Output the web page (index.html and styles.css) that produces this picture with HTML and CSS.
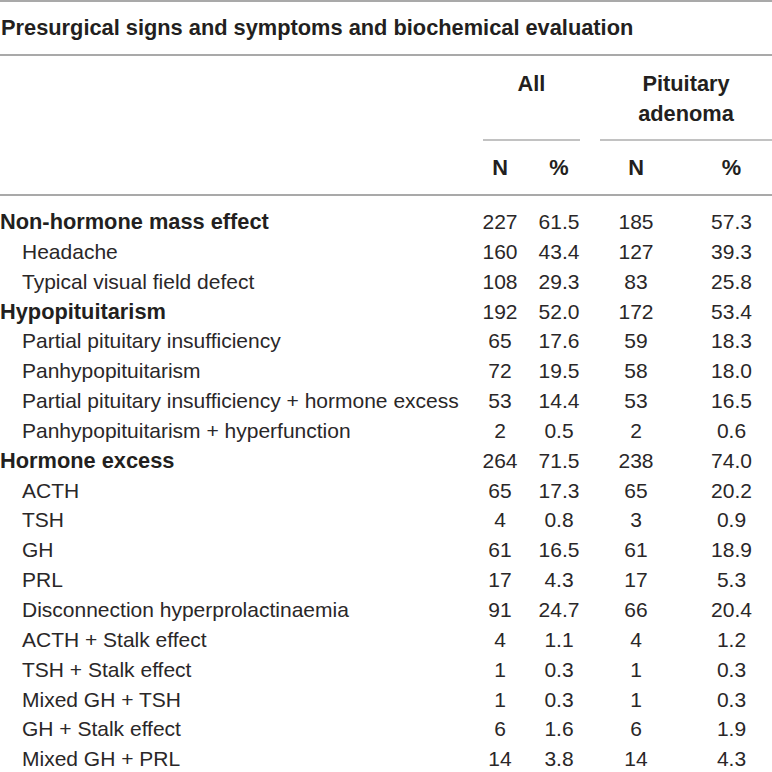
FILE: index.html
```html
<!DOCTYPE html>
<html>
<head>
<meta charset="utf-8">
<link rel="stylesheet" href="styles.css">
</head>
<body>
<table class="tbl">
  <colgroup>
    <col class="c-lab"><col class="c-n1"><col class="c-p1"><col class="c-n2"><col class="c-p2">
  </colgroup>
  <thead>
    <tr class="title-row"><th colspan="5" class="title">Presurgical signs and symptoms and biochemical evaluation</th></tr>
    <tr class="grp-row">
      <th class="blank" rowspan="2"></th>
      <th colspan="2" class="grp"><div class="grp-in g1">All</div></th>
      <th colspan="2" class="grp"><div class="grp-in g2">Pituitary<br>adenoma</div></th>
    </tr>
    <tr class="sub-row"><th class="num">N</th><th class="num">%</th><th class="num">N</th><th class="num last">%</th></tr>
  </thead>
  <tbody>
    <tr class="first"><td class="lab b">Non-hormone mass effect</td><td class="num">227</td><td class="num">61.5</td><td class="num">185</td><td class="num last">57.3</td></tr>
    <tr><td class="lab i">Headache</td><td class="num">160</td><td class="num">43.4</td><td class="num">127</td><td class="num last">39.3</td></tr>
    <tr><td class="lab i">Typical visual field defect</td><td class="num">108</td><td class="num">29.3</td><td class="num">83</td><td class="num last">25.8</td></tr>
    <tr><td class="lab b">Hypopituitarism</td><td class="num">192</td><td class="num">52.0</td><td class="num">172</td><td class="num last">53.4</td></tr>
    <tr><td class="lab i">Partial pituitary insufficiency</td><td class="num">65</td><td class="num">17.6</td><td class="num">59</td><td class="num last">18.3</td></tr>
    <tr><td class="lab i">Panhypopituitarism</td><td class="num">72</td><td class="num">19.5</td><td class="num">58</td><td class="num last">18.0</td></tr>
    <tr><td class="lab i">Partial pituitary insufficiency + hormone excess</td><td class="num">53</td><td class="num">14.4</td><td class="num">53</td><td class="num last">16.5</td></tr>
    <tr><td class="lab i">Panhypopituitarism + hyperfunction</td><td class="num">2</td><td class="num">0.5</td><td class="num">2</td><td class="num last">0.6</td></tr>
    <tr><td class="lab b">Hormone excess</td><td class="num">264</td><td class="num">71.5</td><td class="num">238</td><td class="num last">74.0</td></tr>
    <tr><td class="lab i">ACTH</td><td class="num">65</td><td class="num">17.3</td><td class="num">65</td><td class="num last">20.2</td></tr>
    <tr><td class="lab i">TSH</td><td class="num">4</td><td class="num">0.8</td><td class="num">3</td><td class="num last">0.9</td></tr>
    <tr><td class="lab i">GH</td><td class="num">61</td><td class="num">16.5</td><td class="num">61</td><td class="num last">18.9</td></tr>
    <tr><td class="lab i">PRL</td><td class="num">17</td><td class="num">4.3</td><td class="num">17</td><td class="num last">5.3</td></tr>
    <tr><td class="lab i">Disconnection hyperprolactinaemia</td><td class="num">91</td><td class="num">24.7</td><td class="num">66</td><td class="num last">20.4</td></tr>
    <tr><td class="lab i">ACTH + Stalk effect</td><td class="num">4</td><td class="num">1.1</td><td class="num">4</td><td class="num last">1.2</td></tr>
    <tr><td class="lab i">TSH + Stalk effect</td><td class="num">1</td><td class="num">0.3</td><td class="num">1</td><td class="num last">0.3</td></tr>
    <tr><td class="lab i">Mixed GH + TSH</td><td class="num">1</td><td class="num">0.3</td><td class="num">1</td><td class="num last">0.3</td></tr>
    <tr><td class="lab i">GH + Stalk effect</td><td class="num">6</td><td class="num">1.6</td><td class="num">6</td><td class="num last">1.9</td></tr>
    <tr><td class="lab i">Mixed GH + PRL</td><td class="num">14</td><td class="num">3.8</td><td class="num">14</td><td class="num last">4.3</td></tr>
  </tbody>
</table>
</body>
</html>
```
FILE: styles.css
```css
html, body {
  margin: 0;
  padding: 0;
  background: #ffffff;
}
body {
  font-family: "Liberation Sans", Arial, sans-serif;
  color: #231f20;
}
.tbl {
  width: 772px;
  table-layout: fixed;
  border-collapse: separate;
  border-spacing: 0;
}
.c-lab { width: 470px; }
.c-n1 { width: 60px; }
.c-p1 { width: 58px; }
.c-n2 { width: 96px; }
.c-p2 { width: 88px; }

th, td {
  padding: 0;
  white-space: nowrap;
}
.title {
  text-align: left;
  font-weight: bold;
  font-size: 21.8px;
  line-height: 52px;
  padding-left: 1px;
  border-top: 2px solid #a9a9a9;
  border-bottom: 2px solid #a9a9a9;
}
.grp {
  vertical-align: top;
  font-weight: bold;
  font-size: 21.8px;
  line-height: 30px;
}
.grp-in {
  height: 60px;
  padding: 13px 0 10px;
  text-align: center;
  border-bottom: 2px solid #c2c2c2;
}
.g1 { margin: 0 8px 0 13px; }
.g2 { margin: 0 0 0 12px; }

.sub-row th {
  font-weight: bold;
  font-size: 21.8px;
  line-height: 30px;
  padding-top: 12px;
  padding-bottom: 11px;
  border-bottom: 2px solid #a9a9a9;
}
.sub-row th.last { padding-left: 7px; }
.blank { border-bottom: 2px solid #a9a9a9; }

td {
  font-size: 21px;
  line-height: 29.85px;
  vertical-align: baseline;
  color: #2a2728;
}
.num { text-align: center; }
td.last { padding-left: 7px; }
.lab.b {
  font-weight: bold;
  font-size: 21.8px;
  padding-left: 0;
  color: #231f20;
}
.lab.i { padding-left: 22px; }
tr.first td { padding-top: 11px; }
```
